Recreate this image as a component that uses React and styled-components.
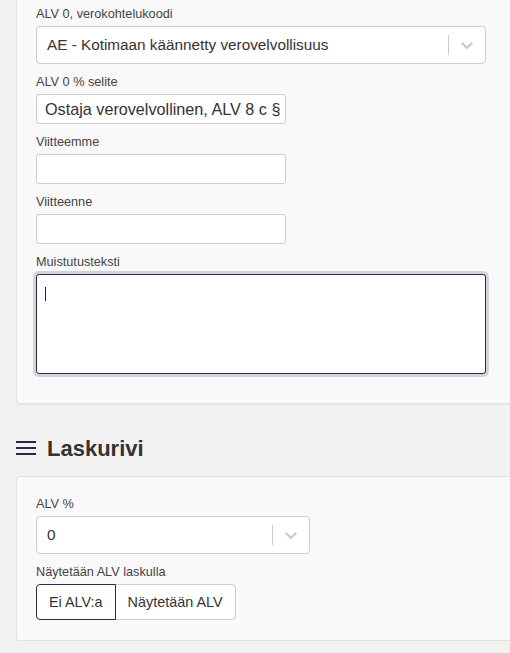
import React from 'react'
import styled, { createGlobalStyle } from 'styled-components'

const GlobalStyle = createGlobalStyle`
  body {
    margin: 0;
    background: #f2f2f2;
    font-family: "Liberation Sans", Arial, sans-serif;
    color: #333;
    overflow: hidden;
  }
`

const Chevron = () => (
  <svg width="20" height="20" viewBox="0 0 20 20" fill="currentColor">
    <path d="M4.516 7.548c0.436-0.446 1.043-0.481 1.576 0l3.908 3.747 3.908-3.747c0.533-0.481 1.141-0.446 1.574 0 0.436 0.445 0.408 1.197 0 1.615-0.406 0.418-4.695 4.502-4.695 4.502-0.217 0.223-0.502 0.335-0.787 0.335s-0.57-0.112-0.789-0.335c0 0-4.287-4.084-4.695-4.502s-0.436-1.170 0-1.615z" />
  </svg>
)

const Select = ({ value, width }) => (
  <SelectBox $width={width}>
    <SelectValue>{value}</SelectValue>
    <Separator />
    <Indicator>
      <Chevron />
    </Indicator>
  </SelectBox>
)

const Field = ({ label, children, last }) => (
  <FormGroup $last={last}>
    <Label>{label}</Label>
    {children}
  </FormGroup>
)

const App = () => (
  <Page>
    <GlobalStyle />
    <Card $top="-20px" $pt="25px" $pb="19px">
      <Field label="ALV 0, verokohtelukoodi">
        <Select value="AE - Kotimaan käännetty verovelvollisuus" width="450px" />
      </Field>
      <Field label="ALV 0 % selite">
        <Input readOnly value="Ostaja verovelvollinen, ALV 8 c §" />
      </Field>
      <Field label="Viitteemme">
        <Input readOnly value="" />
      </Field>
      <Field label="Viitteenne">
        <Input readOnly value="" />
      </Field>
      <Field label="Muistutusteksti">
        <TextWrap>
          <TextArea />
          <Caret />
        </TextWrap>
      </Field>
    </Card>

    <Heading>
      <Burger>
        <span />
        <span />
        <span />
      </Burger>
      Laskurivi
    </Heading>

    <Card $top="0" $pt="19px" $pb="20px">
      <Field label="ALV %">
        <Select value="0" width="274px" />
      </Field>
      <Field label="Näytetään ALV laskulla" last>
        <ButtonGroup>
          <ToggleButton $active>Ei ALV:a</ToggleButton>
          <ToggleButton>Näytetään ALV</ToggleButton>
        </ButtonGroup>
      </Field>
    </Card>
  </Page>
)

export default App

const Page = styled.div`
  width: 510px;
  padding-left: 16px;
  box-sizing: border-box;
`

const Card = styled.div`
  margin-top: ${p => p.$top};
  margin-right: -24px;
  padding: ${p => p.$pt} 19px ${p => p.$pb};
  background: #f9f9f9;
  border: 1px solid #e2e2e2;
  border-radius: 4px;
  box-shadow: 0 1px 2px rgba(0, 0, 0, 0.06);
`

const FormGroup = styled.div`
  margin-bottom: ${p => (p.$last ? '0' : '10px')};
`

const Label = styled.label`
  display: block;
  font-size: 12.7px;
  line-height: 16px;
  color: #444;
  margin-bottom: 4px;
`

const SelectBox = styled.div`
  width: ${p => p.$width};
  height: 38px;
  box-sizing: border-box;
  display: flex;
  align-items: center;
  background: #fff;
  border: 1px solid #ccc;
  border-radius: 4px;
`

const SelectValue = styled.div`
  flex: 1;
  padding: 0 10px;
  font-size: 15.3px;
  color: #333;
  white-space: nowrap;
  overflow: hidden;
`

const Separator = styled.span`
  align-self: stretch;
  width: 1px;
  margin: 8px 0;
  background: #ccc;
`

const Indicator = styled.div`
  display: flex;
  padding: 8px;
  color: #ccc;
`

const Input = styled.input`
  display: block;
  width: 250px;
  height: 30px;
  box-sizing: border-box;
  padding: 0 2px 0 8px;
  font-family: inherit;
  font-size: 16.2px;
  color: #333;
  background: #fff;
  border: 1px solid #ccc;
  border-radius: 3px;
  outline: none;
`

const TextWrap = styled.div`
  position: relative;
  width: 450px;
`

const TextArea = styled.textarea`
  display: block;
  width: 450px;
  height: 100px;
  box-sizing: border-box;
  resize: none;
  font-family: inherit;
  font-size: 14px;
  background: #fff;
  border: 1px solid #2b2a4c;
  border-radius: 3px;
  box-shadow: 0 0 0 3px #d2d2da;
  outline: none;
`

const Caret = styled.span`
  position: absolute;
  left: 9px;
  top: 13px;
  width: 1px;
  height: 14px;
  background: #222;
`

const Heading = styled.h2`
  display: flex;
  align-items: center;
  gap: 11px;
  margin: 30px 0 12px;
  font-size: 22px;
  line-height: 30px;
  font-weight: bold;
  color: #333;
`

const Burger = styled.div`
  display: flex;
  flex-direction: column;
  gap: 4px;
  width: 20px;
  margin-top: -2px;

  span {
    display: block;
    height: 2px;
    background: #27264d;
  }
`

const ButtonGroup = styled.div`
  display: inline-flex;
`

const ToggleButton = styled.button`
  height: 36px;
  padding: 0 12px;
  font-family: inherit;
  font-size: 14.4px;
  color: #333;
  background: #fff;
  border: 1px solid ${p => (p.$active ? '#2b2a4c' : '#ccc')};
  margin-left: ${p => (p.$active ? '0' : '-1px')};
  position: ${p => (p.$active ? 'relative' : 'static')};
  z-index: ${p => (p.$active ? 1 : 0)};

  &:first-child {
    border-radius: 4px 0 0 4px;
  }
  &:last-child {
    border-radius: 0 4px 4px 0;
  }
`
